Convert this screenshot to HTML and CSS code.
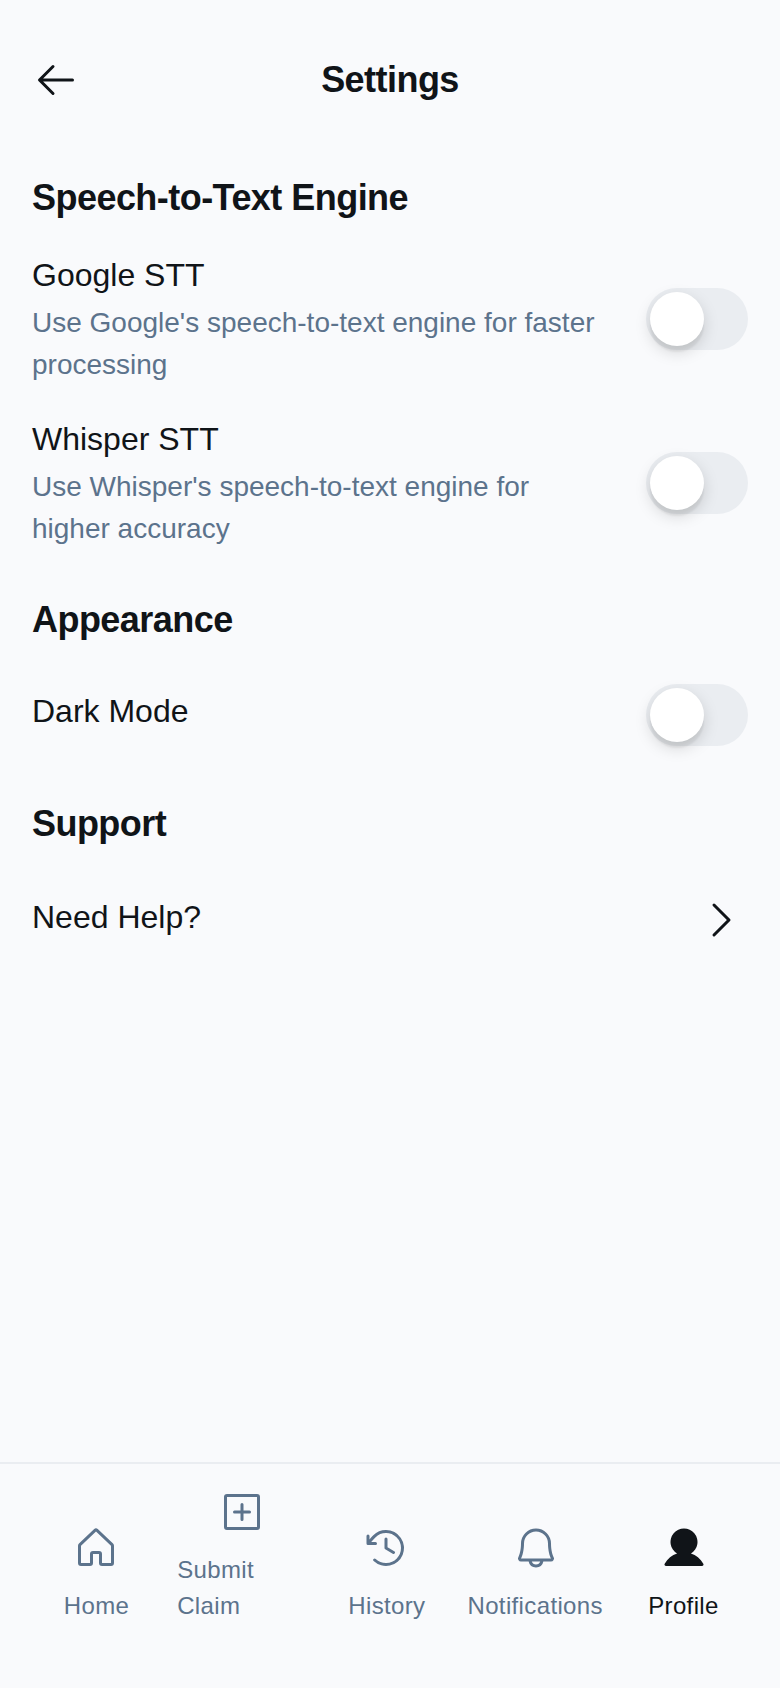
FILE: index.html
```html
<!DOCTYPE html>
<html lang="en">
<head>
<meta charset="utf-8">
<title>Settings</title>
<link rel="stylesheet" href="styles.css">
</head>
<body>
<div class="screen">
  <main>
    <header class="topbar">
      <svg class="icon-lg" viewBox="0 0 256 256" fill="currentColor"><path d="M224,128a8,8,0,0,1-8,8H59.31l58.35,58.34a8,8,0,0,1-11.32,11.32l-72-72a8,8,0,0,1,0-11.32l72-72a8,8,0,0,1,11.32,11.32L59.31,120H216A8,8,0,0,1,224,128Z"/></svg>
      <h1 class="title">Settings</h1>
    </header>
    <h2 class="section section-engine">Speech-to-Text Engine</h2>
    <div class="row row-tall">
      <div class="copy">
        <p class="label">Google STT</p>
        <p class="hint">Use Google's speech-to-text engine for faster processing</p>
      </div>
      <div class="toggle"><div class="knob"></div></div>
    </div>
    <div class="row row-tall">
      <div class="copy">
        <p class="label">Whisper STT</p>
        <p class="hint">Use Whisper's speech-to-text engine for higher accuracy</p>
      </div>
      <div class="toggle"><div class="knob"></div></div>
    </div>
    <h2 class="section section-appearance">Appearance</h2>
    <div class="row">
      <p class="label label-toggle">Dark Mode</p>
      <div class="toggle"><div class="knob"></div></div>
    </div>
    <h2 class="section section-support">Support</h2>
    <div class="row">
      <p class="label label-link">Need Help?</p>
      <div class="chevron"><svg class="icon-lg" viewBox="0 0 256 256" fill="currentColor"><path d="M181.66,133.66l-80,80a8,8,0,0,1-11.32-11.32L164.69,128,90.34,53.66a8,8,0,0,1,11.32-11.32l80,80A8,8,0,0,1,181.66,133.66Z"/></svg></div>
    </div>
  </main>
  <nav class="tabs">
    <a class="tab"><span class="tab-icon nudge-left"><svg class="icon-lg" viewBox="0 0 256 256" fill="currentColor"><path d="M218.83,103.77l-80-75.48a1.14,1.14,0,0,1-.11-.11,16,16,0,0,0-21.53,0l-.11.11L37.17,103.77A16,16,0,0,0,32,115.55V208a16,16,0,0,0,16,16H96a16,16,0,0,0,16-16V160h32v48a16,16,0,0,0,16,16h48a16,16,0,0,0,16-16V115.55A16,16,0,0,0,218.83,103.77ZM208,208H160V160a16,16,0,0,0-16-16H112a16,16,0,0,0-16,16v48H48V115.55l.11-.1L128,40l79.9,75.43.11.1Z"/></svg></span><span class="tab-label">Home</span></a>
    <a class="tab"><span class="tab-icon"><svg class="icon-lg" viewBox="0 0 256 256" fill="currentColor"><path d="M208,32H48A16,16,0,0,0,32,48V208a16,16,0,0,0,16,16H208a16,16,0,0,0,16-16V48A16,16,0,0,0,208,32Zm0,176H48V48H208V208Zm-32-80a8,8,0,0,1-8,8H136v32a8,8,0,0,1-16,0V136H88a8,8,0,0,1,0-16h32V88a8,8,0,0,1,16,0v32h32A8,8,0,0,1,176,128Z"/></svg></span><span class="tab-label">Submit Claim</span></a>
    <a class="tab"><span class="tab-icon nudge-left"><svg class="icon-lg" viewBox="0 0 256 256" fill="currentColor"><path d="M136,80v43.47l36.12,21.67a8,8,0,0,1-8.24,13.72l-40-24A8,8,0,0,1,120,128V80a8,8,0,0,1,16,0Zm-8-48A95.44,95.44,0,0,0,60.08,60.15C52.81,67.51,46.35,74.59,40,82V64a8,8,0,0,0-16,0v40a8,8,0,0,0,8,8H72a8,8,0,0,0,0-16H49c7.15-8.42,14.27-16.35,22.39-24.57a80,80,0,1,1,1.66,114.75,8,8,0,1,0-11,11.64A96,96,0,1,0,128,32Z"/></svg></span><span class="tab-label">History</span></a>
    <a class="tab"><span class="tab-icon nudge-right"><svg class="icon-lg" viewBox="0 0 256 256" fill="currentColor"><path d="M221.8,175.94C216.25,166.38,208,139.33,208,104a80,80,0,1,0-160,0c0,35.34-8.26,62.38-13.81,71.94A16,16,0,0,0,48,200H88.81a40,40,0,0,0,78.38,0H208a16,16,0,0,0,13.8-24.06ZM128,216a24,24,0,0,1-22.62-16h45.24A24,24,0,0,1,128,216ZM48,184c7.7-13.24,16-43.92,16-80a64,64,0,1,1,128,0c0,36.05,8.28,66.73,16,80Z"/></svg></span><span class="tab-label">Notifications</span></a>
    <a class="tab tab-active"><span class="tab-icon nudge-right"><svg class="icon-lg" viewBox="0 0 256 256" fill="currentColor"><path d="M230.93,220a8,8,0,0,1-6.93,4H32a8,8,0,0,1-6.92-12c15.23-26.33,38.7-45.21,66.09-54.16a72,72,0,1,1,73.66,0c27.39,8.95,50.86,27.83,66.09,54.16A8,8,0,0,1,230.93,220Z"/></svg></span><span class="tab-label">Profile</span></a>
  </nav>
</div>
</body>
</html>
```
FILE: styles.css
```css
* { box-sizing: border-box; margin: 0; padding: 0; }
body { background: #f9fafc; color: #101418; font-family: "Liberation Sans", Arial, sans-serif; }
.screen { height: 1688px; display: flex; flex-direction: column; justify-content: space-between; }
.icon-lg { display: block; width: 48px; height: 48px; flex: none; }
.topbar { display: flex; align-items: center; height: 144px; padding: 16px 32px 0; }
.title { flex: 1; text-align: center; padding-right: 48px; font-size: 36px; line-height: 46px; letter-spacing: -0.54px; }
.section { font-size: 36px; line-height: 45px; letter-spacing: -0.54px; }
.section-engine { padding: 31px 32px 17px; }
.section-appearance { padding: 32px 32px 17px; }
.section-support { padding: 30px 32px 18px; }
.row { display: flex; align-items: center; justify-content: space-between; gap: 32px; min-height: 112px; padding: 0 32px; }
.row-tall { height: 164px; padding: 16px 32px; }
.copy { flex: 1; }
.copy .label { line-height: 44px; margin-bottom: 5px; }
.label { font-size: 32px; line-height: 48px; }
.label-toggle { padding-bottom: 8px; }
.label-link { padding-bottom: 6px; }
.hint { font-size: 28px; line-height: 42px; margin-bottom: -1px; color: #5c738c; }
.toggle { width: 102px; height: 62px; flex: none; padding: 4px; border-radius: 31px; background: #eaedf1; }
.knob { width: 54px; height: 54px; border-radius: 50%; background: #fff; box-shadow: 0 6px 16px rgba(0,0,0,.15), 0 6px 2px rgba(0,0,0,.06); }
.chevron { width: 56px; height: 56px; display: flex; align-items: center; justify-content: center; }
.tabs { display: flex; gap: 16px; border-top: 2px solid #eaedf1; padding: 16px 32px 64px; height: 226px; }
.tab { flex: 1; display: flex; flex-direction: column; align-items: center; justify-content: flex-end; gap: 8px; color: #5c738c; }
.tab-active { color: #101418; }
.tab-icon { height: 64px; display: flex; align-items: center; }
.nudge-left { margin-right: 1px; }
.nudge-right { margin-left: 1px; }
.tab-label { font-size: 24px; line-height: 36px; letter-spacing: .36px; }
```
